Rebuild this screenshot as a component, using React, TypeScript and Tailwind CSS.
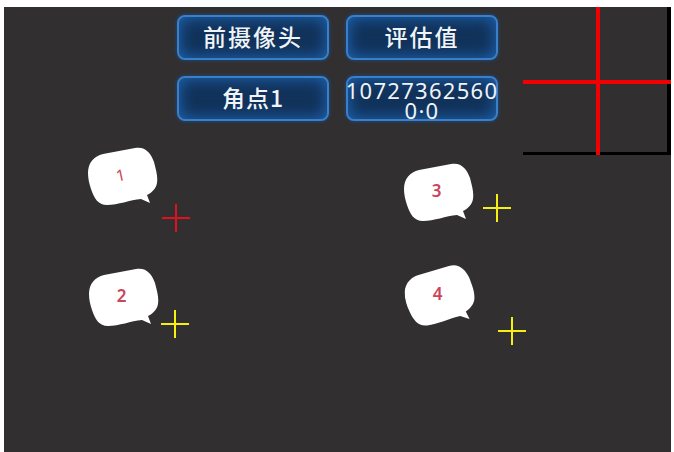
import React from "react";

const bubblePath =
  "M15 7 L47 1 C57 -1 63 6 66 15 C68 23 70 29 69 36 C68 42 63 46 59 48 L62 56 L53 52 C42 53 30 58 19 58 C10 58 6 51 3 42 C1 36 0 31 0 26 C0 16 6 9 15 7 Z";

const Bubble = ({ label, className, numberClass }: { label: string; className: string; numberClass: string }) => (
  <div className={`absolute h-[60px] w-[70px] ${className}`}>
    <svg viewBox="0 0 70 60" className="h-full w-full">
      <path d={bubblePath} fill="#ffffff" />
    </svg>
    <div className="absolute inset-0 flex items-center justify-center pb-[5px] pr-[5px]">
      <span className={`font-['Noto_Sans',sans-serif] leading-none text-[#c8455a] ${numberClass}`}>{label}</span>
    </div>
  </div>
);

const Cross = ({ className, color }: { className: string; color: string }) => (
  <svg viewBox="0 0 28 28" className={`absolute h-7 w-7 ${className}`}>
    <path d="M0 14H28M14 0V28" stroke={color} strokeWidth="2" fill="none" />
  </svg>
);

const NavButton = ({ children, className }: { children: React.ReactNode; className?: string }) => (
  <div
    className={`flex items-center justify-center rounded-lg border-2 border-[#3a7fca] bg-[#11325a] text-[#f0f4f8] shadow-[inset_0_0_16px_#1f68b8,0_0_4px_#1d4f86] ${className ?? ""}`}
  >
    {children}
  </div>
);

const App: React.FC = () => {
  return (
    <div className="h-[452px] w-[674px] overflow-hidden bg-white pl-1 pr-[3px] pt-[7px] font-['Noto_Sans_CJK_SC','Noto_Sans',sans-serif]">
      <div className="relative h-full bg-[#312f30]">
        {/* buttons */}
        <div className="grid grid-cols-[152px_152px] grid-rows-[45px_45px] gap-x-[17px] gap-y-[16px] pl-[173px] pt-2 text-[23px] font-medium tracking-[2px]">
          <NavButton className="pb-[3px]">前摄像头</NavButton>
          <NavButton className="pb-[3px]">评估值</NavButton>
          <NavButton className="pb-[3px] tracking-[1px]">角点1</NavButton>
          <NavButton className="text-center">
            <span className="whitespace-nowrap pt-[3px] font-['Noto_Sans',sans-serif] text-[22px] font-normal leading-[20px] tracking-[1.3px]">
              10727362560
              <br />
              0·0
            </span>
          </NavButton>
        </div>

        {/* preview box top right */}
        <div className="absolute right-0 top-0 flex h-[148px] w-[148px] items-stretch justify-center border-b-[3px] border-r-4 border-black pl-[6px]">
          <div className="h-[148px] w-1 bg-[#f00000]" />
          <div className="absolute -right-1 left-0 top-[73px] h-1 bg-[#f00000]" />
        </div>

        {/* corner points */}
        <Bubble label="1" className="left-[84px] top-[140px]" numberClass="-rotate-12 text-[16px]" />
        <Bubble label="2" className="left-[85px] top-[261px]" numberClass="text-[17px] font-semibold" />
        <Bubble label="3" className="left-[400px] top-[156px]" numberClass="text-[17px] font-semibold" />
        <Bubble label="4" className="left-[401px] top-[259px] -rotate-6" numberClass="rotate-6 text-[17px] font-semibold" />

        <Cross className="left-[158px] top-[197px]" color="#e01020" />
        <Cross className="left-[157px] top-[303px]" color="#f5f010" />
        <Cross className="left-[479px] top-[187px]" color="#f5f010" />
        <Cross className="left-[494px] top-[310px]" color="#f5f010" />
      </div>
    </div>
  );
};

export default App;
